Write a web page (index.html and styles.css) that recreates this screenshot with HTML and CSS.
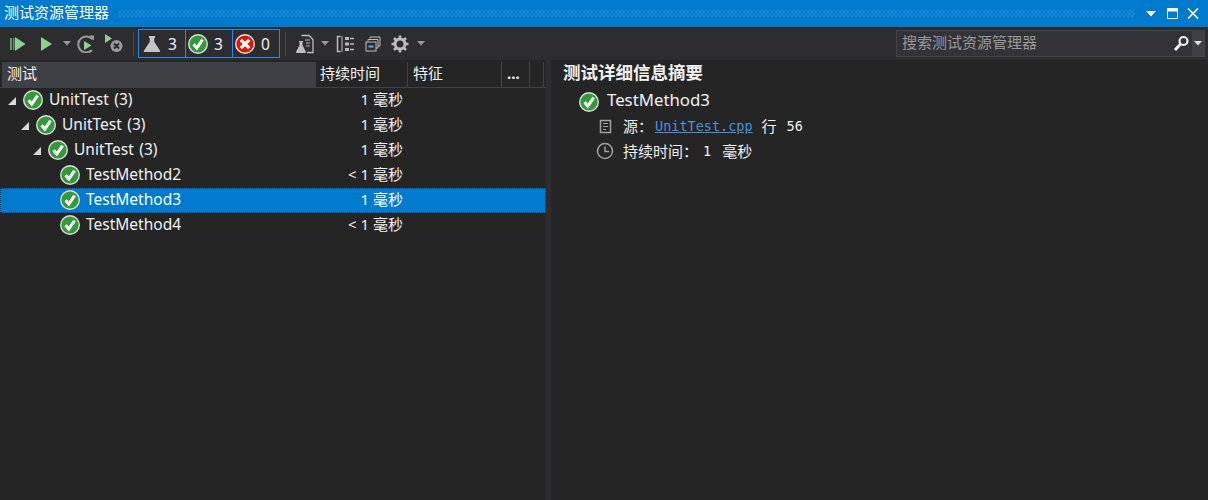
FILE: index.html
```html
<!DOCTYPE html>
<html lang="zh-CN">

<head>
    <meta charset="UTF-8">
    <title>测试资源管理器</title>
    <link rel="stylesheet" href="styles.css">
</head>

<body>
    <svg class="defs" xmlns="http://www.w3.org/2000/svg">
        <symbol id="pass" viewBox="0 0 20 20">
            <circle cx="10" cy="10" r="9.3" fill="#339a3c" stroke="#dcdcdc" stroke-width="1.4" />
            <path d="M5.6 10.2L8.8 14L14.6 5.6" fill="none" stroke="#fff" stroke-width="3" />
        </symbol>
        <symbol id="fail" viewBox="0 0 20 20">
            <circle cx="10" cy="10" r="9.3" fill="#e51400" stroke="#e4e4e4" stroke-width="1.4" />
            <path d="M5.8 5.8L14.2 14.2M14.2 5.8L5.8 14.2" fill="none" stroke="#fff" stroke-width="3.2" />
        </symbol>
        <symbol id="flask" viewBox="0 0 20 20">
            <path d="M6.5 1H13.5V3H12.500V7.500L19 17.500Q19.500 19 18 19H2Q0.500 19 1 17.500L7.500 7.500V3H6.500Z" fill="#c4c4c4" />
        </symbol>
    </svg>

    <div class="titlebar">
        <span class="title">测试资源管理器</span>
        <div class="grip"></div>
        <div class="window-btns">
            <svg width="10" height="6" viewBox="0 0 10 6"><path d="M0 0H10L5 5.500Z" fill="#fff" /></svg>
            <svg class="btn-restore" width="11" height="11" viewBox="0 0 11 11"><path d="M0.500 2H10.500V10.500H0.500Z" fill="none" stroke="#fff" /><path d="M0 0H11V3.500H0Z" fill="#fff" /></svg>
            <svg width="12" height="11" viewBox="0 0 12 11"><path d="M1 0.500L11 10.500M11 0.500L1 10.500" stroke="#fff" stroke-width="1.600" /></svg>
        </div>
    </div>

    <div class="toolbar">
        <div class="tool-group">
            <svg class="tool" width="18" height="18" viewBox="0 0 18 18"><path d="M1 3H3V15H1ZM4 3H5.500V15H4Z" fill="#5d9c5d" /><path d="M6 2L16.500 9L6 16Z" fill="#8ed18e" /></svg>
            <svg class="tool-play" width="14" height="18" viewBox="0 0 14 18"><path d="M1 2L12 9L1 16Z" fill="#8ed18e" /></svg>
            <svg class="caret" width="8" height="5" viewBox="0 0 8 5"><path d="M0 0H8L4 4.500Z" fill="#999" /></svg>
            <svg class="tool" width="18" height="18" viewBox="0 0 18 18"><path d="M15.500 4.500A8 8 0 1 0 15 15" fill="none" stroke="#999" stroke-width="2" /><path d="M12 0.500H17V5.500Z" fill="#999" /><path d="M7 6L14.500 10.500L7 15Z" fill="#8ed18e" /></svg>
            <svg class="tool" width="20" height="20" viewBox="0 0 20 20"><path d="M1 0L8 4.500L1 9Z" fill="#8ed18e" /><circle cx="12.500" cy="12" r="6" fill="#9a9a9a" /><path d="M10 9.500L15 14.500M15 9.500L10 14.500" stroke="#2d2d30" stroke-width="2" /></svg>
        </div>
        <div class="tool-sep"></div>
        <div class="filters">
            <div class="filter"><svg class="flask-icon" width="18" height="18"><use href="#flask" /></svg><span class="flask-count">3</span></div>
            <div class="filter"><svg width="20" height="20"><use href="#pass" /></svg><span>3</span></div>
            <div class="filter"><svg width="20" height="20"><use href="#fail" /></svg><span>0</span></div>
        </div>
        <div class="tool-sep tool-sep-after"></div>
        <div class="tool-group">
            <svg width="20" height="20" viewBox="0 0 20 20"><path d="M6.500 1.500H14L18 5.500V18.500H12" fill="none" stroke="#bdbdbd" stroke-width="1.300" /><path d="M10 6H15M11 9H15M11 12H15" stroke="#bdbdbd" stroke-width="1.200" /><path d="M4 7H8V8H7.500V11L11 18Q11 19 10 19H2Q1 19 1 18L4.500 11V8H4Z" fill="#bdbdbd" /></svg>
            <svg class="caret caret-doc" width="8" height="5" viewBox="0 0 8 5"><path d="M0 0H8L4 4.500Z" fill="#999" /></svg>
            <svg width="19" height="18" viewBox="0 0 19 18"><path d="M4.500 1.500H1.500V16.500H4.500" fill="none" stroke="#bdbdbd" stroke-width="1.500" /><path d="M6 1V17" stroke="#bdbdbd" stroke-width="1" /><path d="M9 2H13V5H9ZM9 7.500H13V10.500H9ZM9 13H13V16H9Z" fill="#bdbdbd" /><path d="M14 3.500H18M14 9H18M14 14.500H18" stroke="#bdbdbd" stroke-width="1.500" /></svg>
            <svg class="tool-windows" width="16" height="16" viewBox="0 0 16 16"><path d="M5 2.500V1H15V10H13" fill="none" stroke="#bdbdbd" /><path d="M3 5V3.500H13V12H11" fill="none" stroke="#bdbdbd" /><rect x="1" y="6" width="10" height="9" fill="#2d2d30" stroke="#bdbdbd" /><path d="M3.500 10.500H8.500" stroke="#6fa8dc" stroke-width="2" /></svg>
            <svg class="tool-gear" width="18" height="18" viewBox="0 0 18 18"><circle cx="9" cy="9" r="5" fill="none" stroke="#bdbdbd" stroke-width="3" /><path d="M9 0.500V4M9 14V17.500M0.500 9H4M14 9H17.500M3 3L5.500 5.500M12.500 12.500L15 15M15 3L12.500 5.500M5.500 12.500L3 15" stroke="#bdbdbd" stroke-width="2.600" /></svg>
            <svg class="caret caret-gear" width="8" height="5" viewBox="0 0 8 5"><path d="M0 0H8L4 4.500Z" fill="#999" /></svg>
        </div>
        <div class="search">
            <span class="search-text">搜索测试资源管理器</span>
            <svg class="search-icon" width="17" height="17" viewBox="0 0 17 17"><circle cx="10.500" cy="6" r="4" fill="none" stroke="#f0f0f0" stroke-width="2.200" /><path d="M7.500 9L2 15" stroke="#f0f0f0" stroke-width="3" /></svg>
            <div class="search-drop"><svg width="8" height="5" viewBox="0 0 8 5"><path d="M0 0H8L4 4.500Z" fill="#e0e0e0" /></svg></div>
        </div>
    </div>

    <div class="panes">
        <div class="list-pane">
            <div class="list-head">
                <div class="col col-name">测试</div>
                <div class="col col-time">持续时间</div>
                <div class="col col-trait">特征</div>
                <div class="col col-more">...</div>
                <div class="col col-rest"></div>
            </div>
            <div class="row level-0">
                <i class="arrow"></i>
                <svg class="status" width="20" height="20"><use href="#pass" /></svg>
                <span class="name">UnitTest (3)</span>
                <span class="duration">1 毫秒</span>
            </div>
            <div class="row level-1">
                <i class="arrow"></i>
                <svg class="status" width="20" height="20"><use href="#pass" /></svg>
                <span class="name">UnitTest (3)</span>
                <span class="duration">1 毫秒</span>
            </div>
            <div class="row level-2">
                <i class="arrow"></i>
                <svg class="status" width="20" height="20"><use href="#pass" /></svg>
                <span class="name">UnitTest (3)</span>
                <span class="duration">1 毫秒</span>
            </div>
            <div class="row level-3">
                <svg class="status" width="20" height="20"><use href="#pass" /></svg>
                <span class="name">TestMethod2</span>
                <span class="duration">&lt; 1 毫秒</span>
            </div>
            <div class="row level-3 selected">
                <svg class="status" width="20" height="20"><use href="#pass" /></svg>
                <span class="name">TestMethod3</span>
                <span class="duration">1 毫秒</span>
            </div>
            <div class="row level-3">
                <svg class="status" width="20" height="20"><use href="#pass" /></svg>
                <span class="name">TestMethod4</span>
                <span class="duration">&lt; 1 毫秒</span>
            </div>
        </div>
        <div class="splitter"></div>
        <div class="detail-pane">
            <h2 class="detail-title">测试详细信息摘要</h2>
            <div class="detail-name">
                <svg class="detail-status" width="20" height="20"><use href="#pass" /></svg>
                <span>TestMethod3</span>
            </div>
            <div class="detail-line">
                <svg class="detail-icon" width="18" height="18" viewBox="0 0 18 18"><rect x="4.500" y="3.500" width="10" height="12" fill="none" stroke="#a0a0a0" stroke-width="1.500" /><path d="M7 6.500H12M7 9.500H12M7 12.500H10" stroke="#a0a0a0" /></svg>
                <span>源：</span><a class="source-link" href="#">UnitTest.cpp</a><span class="after-link">行</span><span class="mono">56</span>
            </div>
            <div class="detail-line">
                <svg class="detail-icon" width="18" height="18" viewBox="0 0 18 18"><circle cx="9" cy="9" r="7.500" fill="none" stroke="#a0a0a0" stroke-width="1.500" /><path d="M9 4.500V9.500H13" fill="none" stroke="#a0a0a0" stroke-width="1.500" /></svg>
                <span>持续时间：</span><span class="mono mono-one">1</span><span class="after-one">毫秒</span>
            </div>
        </div>
    </div>
</body>

</html>
```

FILE: styles.css
```css
* {
    margin: 0;
    padding: 0;
    box-sizing: border-box;
}

html,
body {
    height: 100%;
    overflow: hidden;
}

body {
    display: flex;
    flex-direction: column;
    background-color: #252526;
    color: #f1f1f1;
    font-family: 'Noto Sans', 'Noto Sans CJK SC', sans-serif;
    font-size: 15px;
}

.defs {
    display: none;
}

svg {
    display: block;
    flex-shrink: 0;
}

/* Title bar */
.titlebar {
    display: flex;
    align-items: center;
    height: 27px;
    background-color: #007acc;
    color: #fff;
    padding: 0 9px 0 4px;
    flex-shrink: 0;
}

.title {
    font-size: 15px;
    line-height: 25px;
    padding-bottom: 2px;
}

.grip {
    flex-grow: 1;
    height: 7px;
    margin: 0 11px 0 9px;
    background-image:
        radial-gradient(#1f8cd4 0.7px, transparent 1px),
        radial-gradient(#1f8cd4 0.7px, transparent 1px);
    background-size: 4px 4px;
    background-position: 0 0, 2px 2px;
}

.window-btns {
    display: flex;
    align-items: center;
    gap: 9px;
}

.btn-restore {
    margin-left: 2px;
}

/* Toolbar */
.toolbar {
    display: flex;
    align-items: center;
    height: 33px;
    background-color: #2d2d30;
    flex-shrink: 0;
    padding-left: 9px;
}

.tool-group {
    display: flex;
    align-items: center;
}

.tool-play {
    margin-left: 13px;
}

.caret {
    margin: 0 6px 0 9px;
}

.tool + .tool {
    margin-left: 9px;
}

.caret-doc {
    margin: 0 7px 0 6px;
}

.tool-windows {
    margin-left: 10px;
}

.tool-gear {
    margin-left: 10px;
}

.caret-gear {
    margin: 0 0 0 8px;
}

.tool-sep {
    width: 1px;
    height: 24px;
    margin: 0 4px 0 9px;
    background-color: #46464a;
}

.tool-sep-after {
    margin: 0 9px 0 5px;
}

.filters {
    display: flex;
}

.filter {
    display: flex;
    align-items: center;
    width: 48px;
    height: 29px;
    padding-left: 2px;
    border: 1px solid #2f86e0;
    margin-right: -1px;
    color: #f1f1f1;
    font-size: 15.500px;
}

.filter:last-child {
    margin-right: 0;
}

.filter span {
    margin-left: 6px;
}

.flask-icon {
    margin-left: 2px;
}

.filter .flask-count {
    margin-left: 7px;
}

.search {
    display: flex;
    align-items: center;
    width: 309px;
    height: 27px;
    margin-left: auto;
    margin-right: 3px;
    padding-left: 5px;
    background-color: #333337;
    border: 1px solid #434346;
}

.search-text {
    flex-grow: 1;
    font-size: 15px;
    line-height: 22px;
    padding-bottom: 3px;
    color: #999;
}

.search-icon {
    margin-right: 2px;
}

.search-drop {
    display: flex;
    align-items: center;
    justify-content: center;
    width: 12px;
    height: 100%;
    background-color: #3f3f46;
}

/* Panes */
.panes {
    display: flex;
    flex-grow: 1;
    min-height: 0;
}

.list-pane {
    width: 546px;
    padding-top: 2px;
    flex-shrink: 0;
}

.splitter {
    width: 5px;
    background-color: #2d2d30;
}

.list-head {
    display: flex;
    height: 26px;
    font-size: 15px;
    line-height: 23px;
    padding-left: 2px;
    border-bottom: 1px solid #3f3f46;
}

.col {
    padding-left: 5px;
    border-right: 1px solid #3f3f46;
}

.col-name {
    width: 314px;
    background-color: #3f3f46;
}

.col-time {
    width: 92px;
    padding-left: 4px;
}

.col-trait {
    width: 94px;
}

.col-more {
    width: 28px;
    font-weight: 700;
}

.col-rest {
    width: 14px;
}

.row {
    display: flex;
    align-items: center;
    height: 25px;
    padding-bottom: 1px;
}

.level-0 { padding-left: 8px; }
.level-1 { padding-left: 21px; }
.level-2 { padding-left: 33px; }
.level-3 { padding-left: 60px; }

.arrow {
    width: 0;
    height: 0;
    margin-right: 7px;
    margin-top: 1px;
    border-style: solid;
    border-width: 0 0 8px 8px;
    border-color: transparent transparent #d8d8d8 transparent;
}

.name {
    margin-left: 6px;
    width: 200px;
    font-size: 15.500px;
    word-spacing: 1.500px;
    padding-bottom: 3px;
}

.duration {
    margin-left: auto;
    margin-right: 143px;
    font-size: 15px;
    padding-bottom: 3px;
}

.selected {
    background-color: #007acc;
    color: #fff;
    outline: 1px dotted #0b2f4a;
    outline-offset: -1px;
}

/* Detail pane */
.detail-pane {
    flex-grow: 1;
    padding: 1px 0 0 12px;
}

.detail-title {
    font-size: 17.500px;
    font-weight: 700;
    line-height: 23px;
    margin-bottom: 4px;
}

.detail-name {
    display: flex;
    align-items: center;
    gap: 8px;
    height: 25px;
    padding-left: 16px;
    font-size: 16.800px;
}

.detail-name span {
    padding-bottom: 3px;
}

.detail-status {
    margin-top: 3px;
}

.detail-line {
    display: flex;
    align-items: center;
    height: 25px;
    padding-left: 33px;
    font-size: 15px;
}

.detail-icon {
    margin-right: 9px;
}

.source-link {
    margin-left: 2px;
    color: #4a90d9;
    font-family: 'DejaVu Sans Mono', monospace;
    font-size: 13.500px;
}

.after-link {
    margin: 0 10px 0 9px;
}

.mono {
    font-family: 'DejaVu Sans Mono', monospace;
    font-size: 13.500px;
}

.mono-one {
    margin-left: 5px;
}

.after-one {
    margin-left: 11px;
}
```
